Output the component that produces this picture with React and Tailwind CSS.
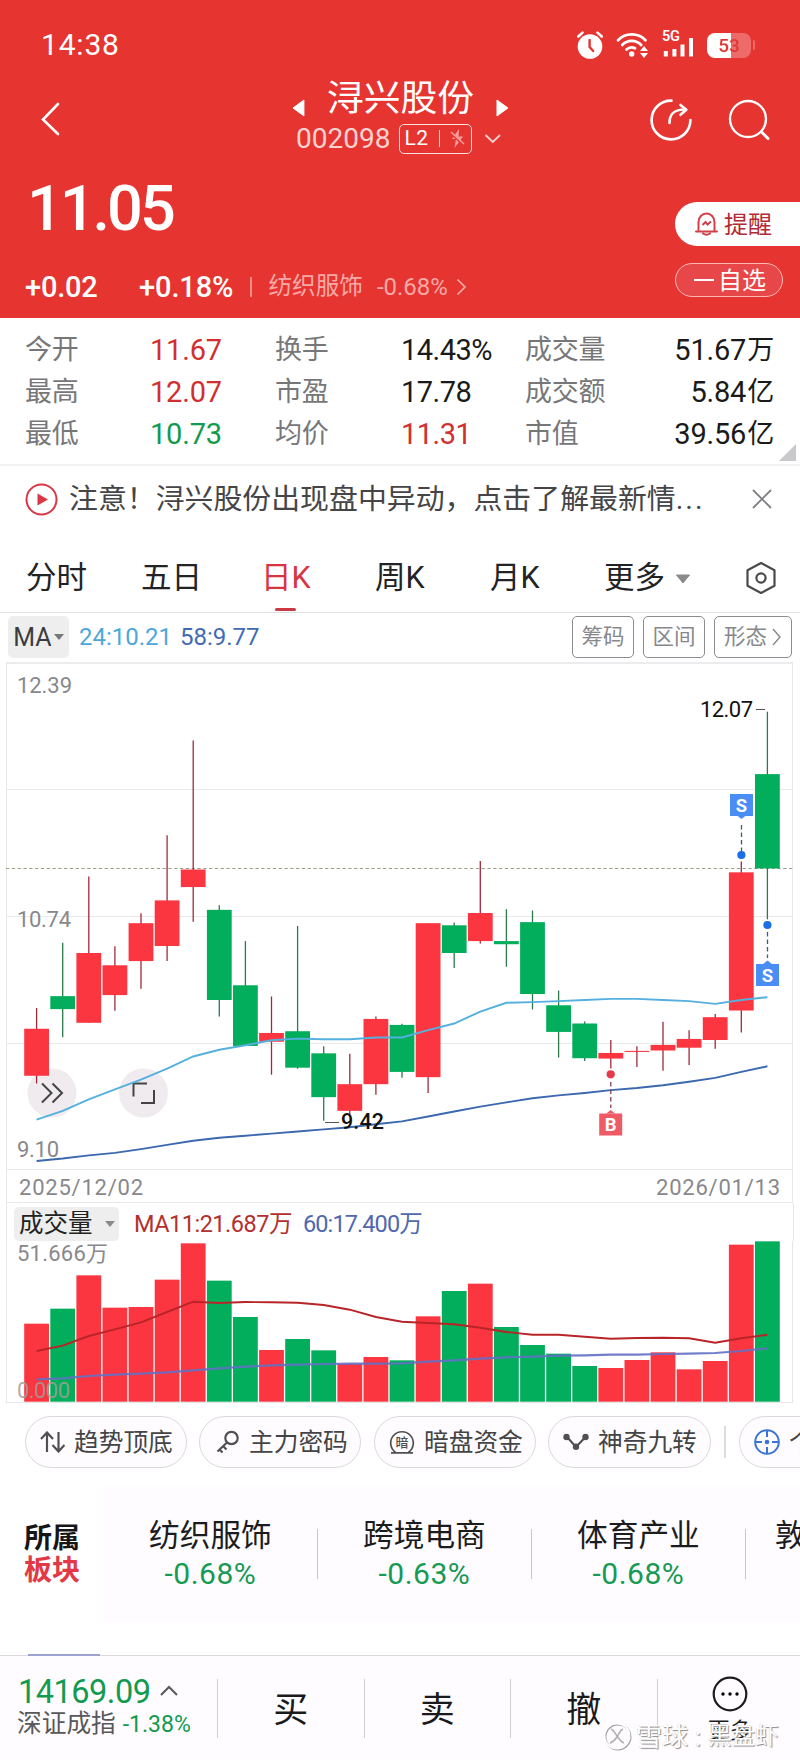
import React from "react";

const RED = "#fb3640";
const GREEN = "#02ae5b";

// [color, bodyTop, bodyBottom, high, low] on the price scale used by py()
const candles = [
  ["r", 1077, 1211, 1018, 1233],
  ["g", 984, 1021, 832, 1101],
  ["r", 861, 1060, 643, 1060],
  ["r", 896, 981, 842, 1026],
  ["r", 776, 884, 748, 963],
  ["r", 711, 841, 525, 884],
  ["r", 623, 673, 255, 772],
  ["g", 738, 995, 725, 1042],
  ["g", 953, 1126, 827, 1126],
  ["r", 1089, 1114, 985, 1208],
  ["g", 1084, 1188, 784, 1191],
  ["g", 1147, 1272, 1127, 1339],
  ["r", 1235, 1311, 1148, 1320],
  ["r", 1049, 1235, 1042, 1265],
  ["g", 1066, 1200, 1063, 1217],
  ["r", 776, 1215, 776, 1260],
  ["g", 782, 861, 774, 904],
  ["r", 747, 827, 599, 834],
  ["g", 827, 836, 736, 900],
  ["g", 773, 978, 740, 1022],
  ["g", 1010, 1086, 968, 1159],
  ["g", 1062, 1161, 1056, 1169],
  ["r", 1146, 1162, 1109, 1190],
  ["r", 1140, 1143, 1127, 1186],
  ["r", 1123, 1139, 1057, 1197],
  ["r", 1106, 1131, 1081, 1180],
  ["r", 1044, 1109, 1035, 1134],
  ["r", 631, 1025, 600, 1088],
  ["g", 351, 620, 173, 765],
];
const ma24 = [1336, 1311, 1278, 1250, 1222, 1191, 1156, 1137, 1124, 1110, 1105, 1107, 1107, 1102, 1102, 1081, 1062, 1028, 1003, 1001, 998, 995, 992, 992, 995, 998, 1006, 995, 987];
const ma58 = [1454, 1447, 1438, 1431, 1420, 1408, 1396, 1388, 1382, 1376, 1370, 1364, 1358, 1349, 1341, 1327, 1313, 1299, 1287, 1275, 1267, 1260, 1252, 1246, 1238, 1228, 1217, 1200, 1184];
// volume series, in thirds of a pixel below y = 1180
const volumes = [428, 383, 283, 380, 378, 296, 187, 299, 408, 507, 474, 508, 549, 528, 538, 406, 330, 308, 438, 492, 518, 555, 561, 537, 514, 565, 540, 191, 181];
const vma11 = [510, 494, 465, 445, 424, 393, 362, 366, 363, 364, 365, 372, 386, 408, 422, 426, 430, 440, 453, 461, 461, 467, 473, 471, 470, 472, 485, 472, 461];
const vma60 = [595, 592, 585, 581, 578, 574, 568, 562, 557, 553, 551, 549, 548, 548, 547, 542, 538, 533, 529, 527, 524, 523, 521, 521, 519, 518, 516, 510, 502];

const cx = (i) => 36.6 + i * 26.1;
const py = (v) => 650 + v / 2.851;
const vy = (v) => 1180 + v / 3;
const line = (data, fy) => data.map((v, i) => `${cx(i).toFixed(1)},${fy(v).toFixed(1)}`).join(" ");
const tone = (c) => (c === "r" ? RED : GREEN);

function StatusBar() {
  return (
    <div className="flex h-[90px] items-center pl-[41px] pr-[45px] text-white">
      <span className="text-[30px] leading-none tracking-[0.8px]">14:38</span>
      <div className="ml-auto flex items-center">
        <svg width="26" height="28" viewBox="0 0 26 28" className="mr-[13px]">
          <circle cx="13" cy="15.500" r="12.300" fill="#fff" />
          <path d="M1.300 5.500 5.500 1.600M24.700 5.500 20.500 1.600" stroke="#fff" strokeWidth="2.600" strokeLinecap="round" />
          <path d="M12.600 9v7l3.600 4" fill="none" stroke="#e63430" strokeWidth="2.400" strokeLinecap="round" />
        </svg>
        <svg width="33" height="26" viewBox="0 0 33 26" className="mr-[13px]">
          <g fill="none" stroke="#fff" strokeWidth="2.700" strokeLinecap="round">
            <path d="M2 8.200a19 19 0 0 1 27.500 0" />
            <path d="M6.200 13a13 13 0 0 1 19 0" />
            <path d="M10.500 17.500a7.500 7.500 0 0 1 8.500-1.200" />
          </g>
          <circle cx="15.700" cy="22" r="2.700" fill="#fff" />
          <path d="M24 19h8l-4-5ZM24 21h8l-4 5Z" fill="#fff" />
        </svg>
        <svg width="32" height="30" viewBox="0 0 32 30" className="mr-[13px] -mt-[2px]">
          <text x="0" y="12" fontSize="14.500" fontWeight="600" textLength="18" fill="#fff">5G</text>
          <path d="M3.800 22v5.500M12.400 20v7.500M20.500 15.500v12M29 9v18.500" stroke="#fff" strokeWidth="4" />
        </svg>
        <div className="flex items-center">
          <div className="flex h-[25px] w-[44px] items-center justify-center rounded-[8px] bg-[linear-gradient(90deg,#ffffff_54%,#ed6c69_54%)]">
            <span className="bg-[linear-gradient(90deg,#e63430_57%,#d93a38_57%)] bg-clip-text text-[19px] font-medium leading-none text-transparent">53</span>
          </div>
          <span className="ml-[2px] h-[10px] w-[2px] rounded-r-full bg-[#ed6c69]" />
        </div>
      </div>
    </div>
  );
}

function TitleBar() {
  return (
    <div className="flex h-[73px] items-start pl-[41px] text-white">
      <svg width="20" height="34" viewBox="0 0 20 34" className="mt-[12px]">
        <path d="M17 2 2 17.500 17 32" fill="none" stroke="#fff" strokeWidth="2.600" strokeLinecap="round" />
      </svg>
      <div className="ml-[231px] flex w-[217px] flex-col">
        <div className="-mt-[10px] flex h-[38px] items-center">
          <svg width="13" height="18" viewBox="0 0 13 18" className="mt-[18px]"><path d="M12 1v16L1 9Z" fill="#fff" stroke="#fff" strokeLinejoin="round" /></svg>
          <span className="ml-[22px] whitespace-nowrap text-[36.800px] leading-none">浔兴股份</span>
          <svg width="13" height="18" viewBox="0 0 13 18" className="ml-[22px] mt-[18px]"><path d="M1 1v16L12 9Z" fill="#fff" stroke="#fff" strokeLinejoin="round" /></svg>
        </div>
        <div className="mt-[5px] flex h-[31px] items-center pl-[4px]">
          <span className="text-[28px] leading-none text-[#fbd3d1]">002098</span>
          <div className="ml-[9px] flex h-[30px] w-[73px] items-center justify-between rounded-[5px] border-[1.500px] border-[#fbe0df] px-[4px]">
            <span className="text-[21px] leading-none tracking-[0.500px]">L2</span>
            <span className="h-[17px] w-[1.500px] bg-[#fbd3d1]" />
            <svg width="15" height="19" viewBox="0 0 15 19" className="mr-[2px]">
              <path d="M9 0 2 10h4L4.500 19 13 7.500H8.500Z" fill="#f5a3a1" />
              <path d="M0 3 14 16" stroke="#e63430" strokeWidth="3" />
              <path d="M1 3 14 15" stroke="#f5a3a1" strokeWidth="1.400" />
            </svg>
          </div>
          <svg width="18" height="11" viewBox="0 0 18 11" className="ml-[12px]"><path d="m1.500 2 7.300 7L16 2" fill="none" stroke="#fbd3d1" strokeWidth="1.800" /></svg>
        </div>
      </div>
      <svg width="42" height="42" viewBox="0 0 42 42" className="ml-[141px] mt-[9px]">
        <g fill="none" stroke="#fff" strokeWidth="2.600" strokeLinecap="round">
          <path d="M21.500 1.600A19.400 19.400 0 1 0 40.400 21" />
          <path d="M19.500 24c0-8.500 3.500-13 14-13.500" />
          <path d="m30.500 6 5.800 4.800-5.800 5" strokeLinejoin="round" />
        </g>
      </svg>
      <svg width="42" height="42" viewBox="0 0 42 42" className="ml-[36px] mt-[9px]">
        <circle cx="20" cy="20" r="18" fill="none" stroke="#fff" strokeWidth="2.300" />
        <path d="m33.500 33 6.500 6.500" stroke="#fff" strokeWidth="3" strokeLinecap="round" />
      </svg>
    </div>
  );
}

function PriceHeader() {
  return (
    <div className="flex h-[155px]">
      <div className="flex flex-col text-white">
        <span className="ml-[27px] mt-[15px] h-[62px] text-[63px] font-medium leading-[62px] tracking-[-3px]">11.05</span>
        <div className="mt-[30px] flex h-[34px] items-center pl-[25px] text-[29px] font-medium leading-none">
          <span className="w-[114px] tracking-[-0.200px]">+0.02</span>
          <span className="w-[111px] tracking-[-0.100px]">+0.18%</span>
          <span className="h-[20px] w-[1.500px] bg-[#f08a87]" />
          <span className="ml-[17px] whitespace-nowrap text-[23.600px] font-normal text-[#f7a9a7]">纺织服饰</span>
          <span className="ml-[14px] text-[24px] font-normal text-[#f7a9a7]">-0.68%</span>
          <svg width="11" height="18" viewBox="0 0 11 18" className="ml-[8px]"><path d="m1.500 1.500 7.500 7.500-7.500 7.500" fill="none" stroke="#f7a9a7" strokeWidth="1.700" /></svg>
        </div>
      </div>
      <div className="ml-auto flex w-[125px] flex-col pt-[39px]">
        <div className="flex h-[44px] items-center rounded-l-full bg-white pl-[20px] text-[#b32a34]">
          <svg width="23" height="24" viewBox="0 0 23 24">
            <g fill="none" stroke="#d2404a" strokeWidth="2">
              <path d="M1 19.500h21M3.500 19V10a8 8.500 0 0 1 16 0v9M8 21.500q3.500 2.500 7 0" strokeLinecap="round" />
              <path d="m7.500 13 3-3 2 2.500 3.500-3" />
            </g>
          </svg>
          <span className="ml-[6px] mt-[2px] text-[24px] leading-none">提醒</span>
        </div>
        <div className="mt-[17px] flex h-[34px] w-[108px] items-center rounded-full border-[1.500px] border-[#f9b9b8] bg-[#e8474a] pl-[18px] text-white">
          <span className="h-[2.500px] w-[20px] bg-white" />
          <span className="ml-[4px] mt-[1px] text-[24px] leading-none">自选</span>
        </div>
      </div>
    </div>
  );
}

const stats = [
  ["今开", "11.67", "text-[#d0302f]", "换手", "14.43%", "text-[#1a1a1a]", "成交量", "51.67万"],
  ["最高", "12.07", "text-[#d0302f]", "市盈", "17.78", "text-[#1a1a1a]", "成交额", "5.84亿"],
  ["最低", "10.73", "text-[#129a50]", "均价", "11.31", "text-[#d0302f]", "市值", "39.56亿"],
];

function Stats() {
  return (
    <div className="relative h-[148px] border-b-2 border-[#f1f1f2] pl-[25px] pr-[26px] pt-[12px]">
      {stats.map((r) => (
        <div key={r[0]} className="flex h-[41.700px] items-center text-[29px] leading-none tracking-[-0.200px]">
          <span className="w-[125px] text-[27px] text-[#77777a]">{r[0]}</span>
          <span className={`w-[125px] ${r[2]}`}>{r[1]}</span>
          <span className="w-[126px] text-[27px] text-[#77777a]">{r[3]}</span>
          <span className={`w-[124px] tracking-[-0.500px] ${r[5]}`}>{r[4]}</span>
          <span className="text-[27px] text-[#77777a]">{r[6]}</span>
          <span className="ml-auto flex items-center text-[#1a1a1a]">
            {r[7].slice(0, -1)}
            <span className="ml-[1px] text-[27px]">{r[7].slice(-1)}</span>
          </span>
        </div>
      ))}
      <svg width="17" height="17" viewBox="0 0 17 17" className="absolute bottom-[3px] right-[4px]"><path d="M0 17 17 0v17Z" fill="#c9c9cb" /></svg>
    </div>
  );
}

function Notice() {
  return (
    <div className="flex h-[66px] items-center pl-[25px] pr-[28px]">
      <svg width="33" height="33" viewBox="0 0 33 33">
        <circle cx="16.500" cy="16.500" r="15" fill="none" stroke="#d93646" strokeWidth="2" />
        <path d="M12.500 10.500v12l10.500-6Z" fill="#d93646" />
      </svg>
      <span className="ml-[11px] w-[640px] whitespace-nowrap text-[28.900px] leading-none text-[#454548]">
        注意！浔兴股份出现盘中异动，点击了解最新情<span className="tracking-[2px]">...</span>
      </span>
      <svg width="20" height="20" viewBox="0 0 20 20" className="ml-auto"><path d="m1 1 18 18M19 1 1 19" stroke="#808084" strokeWidth="1.800" /></svg>
    </div>
  );
}

function Tabs() {
  return (
    <div className="relative flex h-[81px] items-center border-b border-[#dedfe1] pl-[26px] pt-[13px] text-[30.500px] leading-none text-[#232326]">
      <span className="w-[115px]">分时</span>
      <span className="w-[120px]">五日</span>
      <span className="w-[114px] text-[#d83442]">日K</span>
      <span className="w-[115px]">周K</span>
      <span className="w-[114px]">月K</span>
      <span className="w-[61px] whitespace-nowrap">更多</span>
      <svg width="16" height="10" viewBox="0 0 16 10" className="ml-[10px]"><path d="M1.500 1h13L8 9Z" fill="#8a8a8d" stroke="#8a8a8d" strokeLinejoin="round" /></svg>
      <svg width="32" height="34" viewBox="0 0 32 34" className="ml-[54px] -mt-[2px]">
        <path d="M16 2 29.500 9.300v15.400L16 32 2.500 24.700V9.300Z" fill="none" stroke="#4a4a4d" strokeWidth="2.200" strokeLinejoin="round" />
        <circle cx="16" cy="17" r="4.600" fill="none" stroke="#4a4a4d" strokeWidth="2.200" />
      </svg>
      <span className="absolute bottom-[1px] left-[275px] h-[3px] w-[21px] rounded-full bg-[#c93a46]" />
    </div>
  );
}

function Indicators() {
  const btn = "flex h-[42px] items-center justify-center rounded-[5px] border border-[#8c8c90] text-[21.500px] leading-none text-[#88888c]";
  return (
    <div className="flex h-[49px] items-center pb-[1px] pl-[8px] pr-[8px]">
      <div className="flex h-[42px] w-[61px] items-center justify-center gap-[2px] rounded-[5px] bg-[#eeeeef] text-[25px] leading-none text-[#3c3c3e]">
        <span>MA</span>
        <svg width="10" height="6" viewBox="0 0 10 6"><path d="M0 0h10L5 6Z" fill="#77777a" /></svg>
      </div>
      <span className="ml-[10px] w-[101px] text-[24px] leading-none text-[#4ca8da]">24:10.21</span>
      <span className="text-[24px] leading-none text-[#416bb3]">58:9.77</span>
      <div className={`ml-auto w-[62px] ${btn}`}>筹码</div>
      <div className={`ml-[9px] w-[62px] ${btn}`}>区间</div>
      <div className={`ml-[9px] w-[78px] ${btn} gap-[5px]`}>
        形态
        <svg width="10" height="18" viewBox="0 0 10 18"><path d="m1 1 7 8-7 8" fill="none" stroke="#88888c" strokeWidth="1.400" /></svg>
      </div>
    </div>
  );
}

function Marker({ x, y, label, color, up }) {
  return (
    <g>
      <path d={up ? `M${x - 4.500} ${y}l4.500-3.500 4.500 3.500Z` : `M${x - 4.500} ${y + 21.500}l4.500 3.500 4.500-3.500Z`} fill={color} />
      <rect x={x - 11.500} y={y} width="23" height="22" fill={color} />
      <text x={x} y={y + 17.500} fontSize="18.500" fontWeight="700" textAnchor="middle" fill="#fff">{label}</text>
    </g>
  );
}

function PriceChart() {
  return (
    <svg className="block" width="800" height="541" viewBox="0 661 800 541">
      <path d="M6 662H793" stroke="#ececee" strokeWidth="2" />
      <path d="M6.500 661V1202M792.500 661V1202M6 788.500H793M6 915.500H793M6 1042.500H793M6 1168.500H793M6 1201.500H793" stroke="#e9e9eb" fill="none" />
      <path d="M6 867.500H793" stroke="#a09c86" strokeWidth="1.200" strokeDasharray="3.300 2.500" />
      <circle cx="52" cy="1092" r="24.500" fill="#efebee" />
      <circle cx="143.500" cy="1092" r="24.500" fill="#efebee" />
      <g fill="none" stroke="#444" strokeWidth="2">
        <path d="m42 1082.500 9.500 9.500-9.500 9.500M52.500 1082.500l9.500 9.500-9.500 9.500" />
        <path d="M133.500 1095.500v-13H147M141 1102h13v-13" />
      </g>
      {candles.map(([c, top, bottom, high, low], i) => (
        <g key={i}>
          <path d={`M${cx(i)} ${py(high)}V${py(low)}`} stroke={c === "r" ? "#a02a3c" : "#2b7a4c"} strokeWidth="1.300" />
          <rect x={cx(i) - 12.400} y={py(top)} width="24.800" height={py(bottom) - py(top)} fill={tone(c)} />
        </g>
      ))}
      <polyline points={line(ma24, py)} fill="none" stroke="#55b0de" strokeWidth="1.900" />
      <polyline points={line(ma58, py)} fill="none" stroke="#3b68ae" strokeWidth="1.900" />
      <g fontSize="22" fill="#88888c">
        <text x="17" y="692" textLength="55">12.39</text>
        <text x="17" y="926" textLength="54">10.74</text>
        <text x="17" y="1155.500" textLength="42">9.10</text>
        <text x="19" y="1194" textLength="124">2025/12/02</text>
        <text x="656" y="1194" textLength="124">2026/01/13</text>
      </g>
      <path d="M325 1121.500h14M756 708.500h9" stroke="#555" strokeWidth="1.200" />
      <text x="341" y="1128" fontSize="21.500" fontWeight="500" textLength="43" fill="#111">9.42</text>
      <text x="700" y="715.500" fontSize="22" textLength="53" fill="#111">12.07</text>
      <path d="M741.500 824v27M767.500 931v26" stroke="#3a5a86" strokeWidth="1.300" strokeDasharray="4.500 3" />
      <path d="M610.800 1081v26" stroke="#86404c" strokeWidth="1.300" strokeDasharray="4.500 3" />
      <circle cx="741.400" cy="854" r="4.100" fill="#1b6ee6" />
      <circle cx="767.400" cy="924" r="4.100" fill="#1b6ee6" />
      <circle cx="610.700" cy="1073.300" r="4.100" fill="#e63a48" />
      <Marker x={741.500} y={793} label="S" color="#4a8df5" />
      <Marker x={767.500} y={963} label="S" color="#4a8df5" up />
      <Marker x={610.700} y={1112.500} label="B" color="#ee5a66" up />
    </svg>
  );
}

function Volume() {
  return (
    <div>
      <div className="mx-[6px] flex h-[38px] items-end border-x border-[#e9e9eb] pl-[7px]">
        <div className="flex h-[34px] w-[105px] items-center rounded-[5px] bg-[#eeeeef] pl-[5px] text-[24.500px] leading-none text-[#222]">
          <span className="whitespace-nowrap">成交量</span>
          <svg width="10" height="6" viewBox="0 0 10 6" className="ml-[12px]"><path d="M0 0h10L5 6Z" fill="#8a8a8d" /></svg>
        </div>
        <div className="flex h-[34px] items-center whitespace-nowrap pt-[1px] text-[23.500px] leading-none">
          <span className="ml-[15px] w-[169px] tracking-[-0.500px] text-[#b3302f]">MA11:21.687万</span>
          <span className="tracking-[-0.900px] text-[#5068b0]">60:17.400万</span>
        </div>
      </div>
      <svg className="block" width="800" height="162" viewBox="0 1240 800 162">
        <path d="M6.500 1240V1402M792.500 1240V1402M6 1401.500H793" stroke="#e6e6e8" fill="none" />
        {volumes.map((v, i) => (
          <rect key={i} x={cx(i) - 12.400} y={vy(v)} width="24.800" height={1400.700 - vy(v)} fill={tone(candles[i][0])} />
        ))}
        <polyline points={line(vma11, vy)} fill="none" stroke="#b82428" strokeWidth="1.900" />
        <polyline points={line(vma60, vy)} fill="none" stroke="#6470c4" strokeWidth="2.200" strokeOpacity="0.900" />
        <text x="17" y="1259.500" fontSize="22" textLength="91" fill="#88888c">51.666万</text>
        <text x="17" y="1397" fontSize="22" textLength="53" fill="#a29d99" fillOpacity="0.850">0.000</text>
      </svg>
    </div>
  );
}

function Chip({ icon, label, wide }) {
  return (
    <div className={`flex h-[52px] shrink-0 items-center overflow-hidden whitespace-nowrap rounded-full border border-[#dcd9dd] bg-[#fefcfe] text-[24.700px] leading-none text-[#444447] ${wide}`}>
      {icon}
      <span className="ml-[9px] mt-[3px]">{label}</span>
    </div>
  );
}

function Chips() {
  const s = { fill: "none", stroke: "#505053", strokeWidth: 2.2 };
  return (
    <div className="flex h-[78px] items-center overflow-hidden pb-[1px] pl-[25px]">
      <Chip wide="w-[162px] pl-[14px]" label="趋势顶底" icon={
        <svg width="25" height="22" viewBox="0 0 25 22"><g {...s}><path d="M7 21V2M1 8l6-6.500L13 8" /><path d="M18.500 1v19M12.500 14l6 6.500 6-6.500" /></g></svg>} />
      <div className="w-[12px] shrink-0" />
      <Chip wide="w-[162px] pl-[16px]" label="主力密码" icon={
        <svg width="24" height="24" viewBox="0 0 24 24"><g {...s}><circle cx="15.500" cy="8" r="6.200" /><path d="M11 12.500 1.500 21.500M3.500 19.500l3 3M7 16l3.500 3.500" /></g></svg>} />
      <div className="w-[13px] shrink-0" />
      <Chip wide="w-[162px] pl-[14px]" label="暗盘资金" icon={
        <svg width="26" height="26" viewBox="0 0 26 26">
          <path d="M6.500 23.300a11.300 11.300 0 1 1 13 0M2 23.800h22" fill="none" stroke="#505053" strokeWidth="1.700" />
          <text x="13" y="17.800" fontSize="13" fontWeight="500" textAnchor="middle" fill="#505053">暗</text>
        </svg>} />
      <div className="w-[12px] shrink-0" />
      <Chip wide="w-[163px] pl-[14px]" label="神奇九转" icon={
        <svg width="26" height="18" viewBox="0 0 26 18">
          <path d="M4 4 13 14 22.500 4" fill="none" stroke="#505053" strokeWidth="2.200" />
          <circle cx="3.500" cy="4" r="3.200" fill="#505053" /><circle cx="13" cy="13.700" r="3.200" fill="#505053" /><circle cx="22.500" cy="4" r="3.200" fill="#505053" />
        </svg>} />
      <div className="ml-[13px] mr-[13px] h-[32px] w-[2px] shrink-0 bg-[#dedbdf]" />
      <Chip wide="w-[162px] pl-[14px]" label="个股诊断" icon={
        <svg width="26" height="26" viewBox="0 0 26 26">
          <circle cx="13" cy="13" r="11.800" fill="none" stroke="#3a74d8" strokeWidth="2" />
          <path d="M13 1v7M13 18v7M1 13h7M18 13h7" stroke="#3a74d8" strokeWidth="2" />
          <circle cx="13" cy="13" r="2.300" fill="#3a74d8" />
        </svg>} />
    </div>
  );
}

const boards = [["纺织服饰", "-0.68%"], ["跨境电商", "-0.63%"], ["体育产业", "-0.68%"]];

function Boards() {
  return (
    <div className="flex h-[174px] overflow-hidden">
      <div className="flex w-[104px] shrink-0 flex-col pl-[24px] pt-[42px] text-[28px] font-bold leading-[32px] text-[#161616]">
        <span className="whitespace-nowrap">所属</span>
        <span className="whitespace-nowrap text-[#e33845]">板块</span>
      </div>
      <div className="mt-[6px] flex h-[136px] w-[696px] overflow-hidden bg-[#fefcfe]">
        {boards.map(([name, pct]) => (
          <div key={name} className="flex w-[214px] shrink-0 items-start">
            <div className="flex w-[212.800px] flex-col items-center pt-[34px]">
              <span className="text-[30.700px] leading-none text-[#1c1c1e]">{name}</span>
              <span className="mt-[7px] text-[30px] leading-none tracking-[0.500px] text-[#169a55]">{pct}</span>
            </div>
            <span className="mt-[42px] h-[50px] w-[1.200px] shrink-0 bg-[#c9c6ca]" />
          </div>
        ))}
        <span className="shrink-0 whitespace-nowrap pl-[29px] pt-[34px] text-[30.700px] leading-none text-[#1c1c1e]">敦煌网</span>
      </div>
    </div>
  );
}

function Watermark() {
  return (
    <div className="absolute left-[603px] top-[66px] flex items-center text-[26px] leading-none text-white [text-shadow:1px_1px_1px_#8a8a8a,-0.5px_0_0_#ddd]">
      <svg width="29" height="29" viewBox="0 0 29 29" className="mr-[4px]">
        <circle cx="15" cy="15" r="12.500" fill="none" stroke="#a3a3a3" strokeWidth="2" />
        <circle cx="14" cy="14" r="12.500" fill="none" stroke="#fff" strokeWidth="2" />
        <path d="M8 7c3 1 4 4 6 7s4 6 7 7M20 7c-3 1-4 5-6 8s-4 5-7 6" fill="none" stroke="#b0b0b0" strokeWidth="1.600" />
      </svg>
      <span>雪球</span>
      <span className="w-[20px] text-center">:</span>
      <span className="text-[23.500px]">黑盘虾</span>
    </div>
  );
}

function Footer() {
  return (
    <div className="relative flex h-[106px] border-t border-[#dcdadd] bg-[#fefcfe]">
      <span className="absolute -top-[2px] left-[28px] h-[1.500px] w-[72px] bg-[#9da3cf]" />
      <div className="flex w-[217px] flex-col pl-[17px] pt-[19px]">
        <div className="flex items-center">
          <span className="w-[133px] pl-[1px] text-[32.500px] leading-[34px] tracking-[-0.500px] text-[#129a50]">14169.09</span>
          <svg width="18" height="11" viewBox="0 0 18 11" className="-mt-[4px] ml-[10px]"><path d="m1 10 8-8 8 8" fill="none" stroke="#58585b" strokeWidth="2" /></svg>
        </div>
        <div className="mt-[1px] flex h-[28px] items-center whitespace-nowrap leading-none">
          <span className="text-[24.700px] text-[#58585b]">深证成指</span>
          <span className="ml-[7px] text-[23px] text-[#129a50]">-1.38%</span>
        </div>
      </div>
      {["买", "卖", "撤"].map((t) => (
        <div key={t} className="flex w-[146.500px] items-start">
          <span className="mt-[23px] h-[59px] w-[1.200px] bg-[#d2cfd3]" />
          <span className="mt-[37px] flex-1 text-center text-[35px] leading-none text-[#1a1a1c]">{t}</span>
        </div>
      ))}
      <span className="mt-[23px] h-[59px] w-[1.200px] bg-[#d2cfd3]" />
      <div className="flex flex-1 flex-col items-center pl-[2px] pt-[20px]">
        <svg width="36" height="36" viewBox="0 0 36 36">
          <circle cx="18" cy="18" r="16.300" fill="none" stroke="#1c1c1e" strokeWidth="2.200" />
          <circle cx="11" cy="18" r="1.700" /><circle cx="18" cy="18" r="1.700" /><circle cx="25" cy="18" r="1.700" />
        </svg>
        <span className="mt-[8px] text-[22px] leading-none text-[#1a1a1c]">更多</span>
      </div>
      <Watermark />
    </div>
  );
}

export default function App() {
  return (
    <div className="h-[1760px] w-[800px] overflow-hidden bg-white font-['Roboto','Noto_Sans_CJK_SC',sans-serif]">
      <header className="h-[318px] bg-[#e63430]">
        <StatusBar />
        <TitleBar />
        <PriceHeader />
      </header>
      <Stats />
      <Notice />
      <Tabs />
      <Indicators />
      <PriceChart />
      <Volume />
      <Chips />
      <Boards />
      <Footer />
    </div>
  );
}
